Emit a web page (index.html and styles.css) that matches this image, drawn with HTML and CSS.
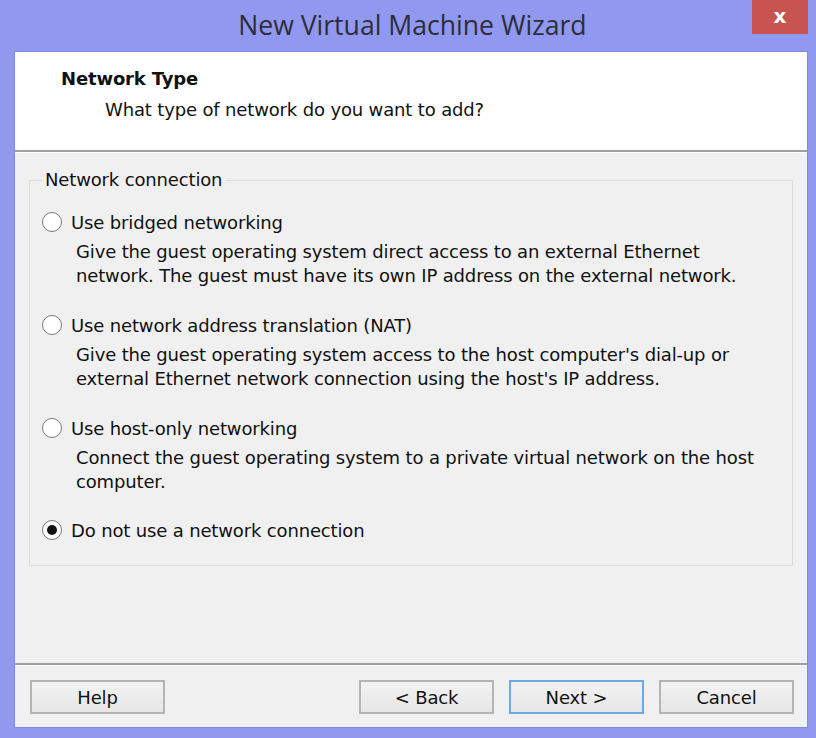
FILE: index.html
```html
<!DOCTYPE html>
<html>
<head>
<meta charset="utf-8">
<link rel="stylesheet" href="styles.css">
</head>
<body>
<div class="window">
  <div class="titlebar">
    <div class="title">New Virtual Machine Wizard</div>
    <div class="close">x</div>
  </div>
  <div class="client">
    <div class="header">
      <div class="h-title">Network Type</div>
      <div class="h-sub">What type of network do you want to add?</div>
    </div>
    <div class="sep"></div>
    <div class="content">
      <fieldset class="group">
        <legend>Network connection</legend>
        <div class="option">
          <div class="row"><span class="radio"></span><span class="label">Use bridged networking</span></div>
          <div class="desc">Give the guest operating system direct access to an external Ethernet<br>network. The guest must have its own IP address on the external network.</div>
        </div>
        <div class="option">
          <div class="row"><span class="radio"></span><span class="label">Use network address translation (NAT)</span></div>
          <div class="desc">Give the guest operating system access to the host computer's dial-up or<br>external Ethernet network connection using the host's IP address.</div>
        </div>
        <div class="option">
          <div class="row"><span class="radio"></span><span class="label">Use host-only networking</span></div>
          <div class="desc">Connect the guest operating system to a private virtual network on the host<br>computer.</div>
        </div>
        <div class="option last">
          <div class="row"><span class="radio checked"></span><span class="label">Do not use a network connection</span></div>
        </div>
      </fieldset>
    </div>
    <div class="sep"></div>
    <div class="footer">
      <button class="btn">Help</button>
      <div class="spacer"></div>
      <button class="btn">&lt; Back</button>
      <button class="btn default">Next &gt;</button>
      <button class="btn">Cancel</button>
    </div>
  </div>
</div>
</body>
</html>
```
FILE: styles.css
```css
* { box-sizing: border-box; }
html, body { margin: 0; padding: 0; }
body {
  width: 816px;
  height: 738px;
  background: #9098f0;
  overflow: hidden;
  font-family: "DejaVu Sans", sans-serif;
  font-size: 18px;
  letter-spacing: -0.15px;
  color: #111;
}
.window {
  width: 816px;
  height: 738px;
  display: flex;
  flex-direction: column;
}
.titlebar {
  height: 52px;
  position: relative;
  display: flex;
  justify-content: center;
  align-items: flex-start;
  padding-left: 8px;
}
.title {
  font-family: "Open Sans", "Noto Sans", sans-serif;
  font-size: 28px;
  letter-spacing: 0;
  color: #2e2e3a;
  line-height: 48px;
  transform: scaleX(0.95);
}
.close {
  position: absolute;
  left: 752px;
  top: 0;
  width: 56px;
  height: 34px;
  background: #c75450;
  color: #fff;
  font-family: "DejaVu Sans", sans-serif;
  font-weight: bold;
  font-size: 20px;
  line-height: 32px;
  text-align: center;
}
.client {
  margin-left: 15px;
  width: 792px;
  height: 675px;
  background: #f0f0f0;
  display: flex;
  flex-direction: column;
  box-shadow: 0 0 0 1px #8088e0;
}
.header {
  height: 98px;
  background: #fff;
  padding: 16px 0 0 46px;
}
.h-title {
  font-weight: bold;
  line-height: 22px;
}
.h-sub {
  padding-left: 44px;
  margin-top: 9px;
  line-height: 22px;
}
.sep {
  height: 3px;
  flex-shrink: 0;
  border-top: 2px solid #a0a0a0;
  background: #fff;
}
.content {
  height: 510px;
  flex-shrink: 0;
  padding: 17px 14px 0 14px;
}
.group {
  margin: 0;
  border: 1px solid #dcdcdc;
  padding: 20px 0 0 12px;
  height: 396px;
}
.group legend {
  padding: 0 3px;
  margin-left: 0;
  line-height: 20px;
}
.option {
  margin-bottom: 25px;
}
.option.last { margin-bottom: 0; margin-top: -1px; }
.row {
  display: flex;
  align-items: center;
  height: 24px;
}
.radio {
  width: 20px;
  height: 20px;
  border-radius: 50%;
  border: 1.5px solid #7a7a7a;
  background: #fff;
  display: flex;
  align-items: center;
  justify-content: center;
  margin-right: 9px;
  flex-shrink: 0;
}
.radio.checked::after {
  content: "";
  width: 10px;
  height: 10px;
  border-radius: 50%;
  background: #111;
}
.desc {
  padding-left: 34px;
  margin-top: 6px;
  line-height: 24px;
}
.footer {
  flex: 1;
  display: flex;
  align-items: flex-start;
  padding: 14px 13px 0 15px;
  gap: 15px;
}
.spacer { flex: 1; }
.btn {
  width: 135px;
  height: 34px;
  font-family: "DejaVu Sans", sans-serif;
  font-size: 18px;
  letter-spacing: -0.15px;
  color: #111;
  background: linear-gradient(#f2f2f2, #e6e6e6);
  border: 2px solid #b4b4b4;
  border-radius: 0;
  padding: 0;
}
.btn.default {
  border-color: #6fa8e8;
}
```
